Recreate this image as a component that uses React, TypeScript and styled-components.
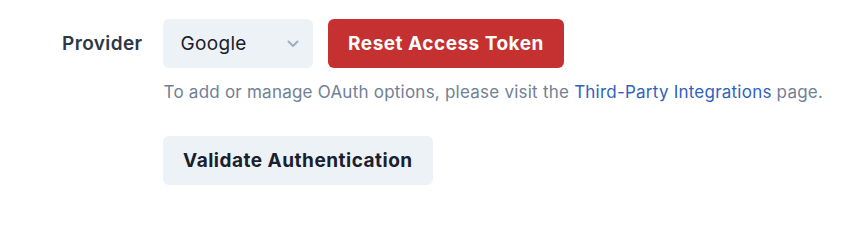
import styled, { createGlobalStyle } from "styled-components";

const GlobalStyle = createGlobalStyle`
  html, body {
    margin: 0;
    padding: 0;
    background: #ffffff;
  }
  body {
    font-family: Inter, "Noto Sans", sans-serif;
    color: #1a202c;
  }
`;

const Page = styled.main`
  padding: 19px 0 0 62px;
`;

const FieldRow = styled.div`
  display: flex;
  flex-direction: row;
  column-gap: 20px;
  align-items: flex-start;
`;

const Label = styled.label`
  height: 49px;
  display: flex;
  align-items: center;
  font-size: 19px;
  letter-spacing: 0.4px;
  font-weight: 600;
  color: #2d3748;
`;

const Controls = styled.div`
  display: flex;
  flex-direction: column;
`;

const ControlLine = styled.div`
  display: flex;
  flex-direction: row;
  column-gap: 15px;
`;

const SelectBox = styled.div`
  position: relative;
  width: 150px;
  height: 49px;
  border-radius: 6px;
  background: #edf2f7;
  display: flex;
  align-items: center;
  box-sizing: border-box;
  padding: 0 18px;
  font-size: 19px;
  letter-spacing: 0.3px;
  color: #1a202c;
`;

const Chevron = styled.svg`
  position: absolute;
  right: 14px;
  top: 50%;
  transform: translateY(-50%);
`;

const Button = styled.button<{ $tone: "danger" | "neutral" }>`
  height: 49px;
  border: none;
  border-radius: 6px;
  padding: 0 20.5px;
  font-family: Inter, "Noto Sans", sans-serif;
  font-size: 19px;
  letter-spacing: 0.5px;
  font-weight: 700;
  cursor: pointer;
  width: fit-content;
  background: ${(p) => (p.$tone === "danger" ? "#c53030" : "#edf2f7")};
  color: ${(p) => (p.$tone === "danger" ? "#ffffff" : "#1a202c")};
`;

const Helper = styled.p`
  margin: 12px 0 0 1px;
  font-size: 17px;
  letter-spacing: 0.23px;
  line-height: 24px;
  color: #718096;
  white-space: nowrap;
`;

const Link = styled.a`
  color: #2f62bd;
  text-decoration: none;
`;

const Actions = styled.div`
  margin-top: 32px;
`;

export default function App() {
  return (
    <>
      <GlobalStyle />
      <Page>
        <FieldRow>
          <Label>Provider</Label>
          <Controls>
            <ControlLine>
              <SelectBox>
                Google
                <Chevron width="12" height="8" viewBox="0 0 12 8" fill="none">
                  <path
                    d="M1.5 1.5 6 6l4.5-4.5"
                    stroke="#a0aec0"
                    strokeWidth="2"
                    strokeLinecap="round"
                    strokeLinejoin="round"
                  />
                </Chevron>
              </SelectBox>
              <Button $tone="danger">Reset Access Token</Button>
            </ControlLine>
            <Helper>
              To add or manage OAuth options, please visit the{" "}
              <Link href="#">Third-Party Integrations</Link> page.
            </Helper>
            <Actions>
              <Button $tone="neutral">Validate Authentication</Button>
            </Actions>
          </Controls>
        </FieldRow>
      </Page>
    </>
  );
}
